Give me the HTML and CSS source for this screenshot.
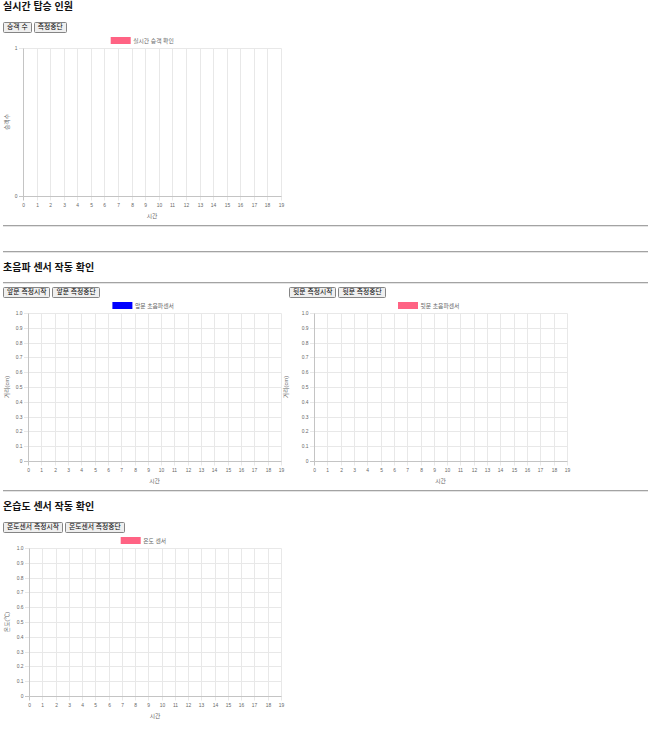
FILE: index.html
```html
<!DOCTYPE html>
<html lang="ko">
<head>
<meta charset="utf-8">
<title>센서 모니터링</title>
<link rel="stylesheet" href="styles.css">
</head>
<body>
<div class="page">
  <h2 class="title">실시간 탑승 인원</h2>
  <div class="btns btns-top"><button class="btn">승객 수</button><button class="btn">측정중단</button></div>
  <svg class="chart" width="283" height="190" data-left="20" data-legend="실시간 승객 확인" data-color="#ff6384" data-lx="107.7" data-ytitle="승객수" data-ytx="5.6" data-ticks="int"></svg>
  <hr class="rule rule-after-chart">
  <hr class="rule rule-gap">
  <h2 class="title title-mid">초음파 센서 작동 확인</h2>
  <hr class="rule rule-under-title">
  <div class="row">
    <div class="col">
      <div class="btns"><button class="btn">앞문 측정시작</button><button class="btn">앞문 측정중단</button></div>
      <svg class="chart" width="283" height="190" data-left="25" data-legend="앞문 초음파센서" data-color="#0000ff" data-lx="109.4" data-ytitle="거리(cm)" data-ytx="5.6" data-ticks="dec"></svg>
    </div>
    <div class="col">
      <div class="btns"><button class="btn">뒷문 측정시작</button><button class="btn">뒷문 측정중단</button></div>
      <svg class="chart" width="283" height="190" data-left="25" data-legend="뒷문 초음파센서" data-color="#ff6384" data-lx="109" data-ytitle="거리(cm)" data-ytx="-1.2" data-ticks="dec"></svg>
    </div>
  </div>
  <hr class="rule rule-after-chart">
  <h2 class="title title-mid">온습도 센서 작동 확인</h2>
  <div class="btns btns-top"><button class="btn">온도센서 측정시작</button><button class="btn">온도센서 측정중단</button></div>
  <svg class="chart" width="283" height="190" data-left="26" data-legend="온도 센서" data-color="#ff6384" data-lx="117.7" data-ytitle="온도(℃)" data-ytx="5.6" data-ticks="dec"></svg>
</div>
<script src="chart.js"></script>
</body>
</html>
```

FILE: styles.css
```css
* { box-sizing: border-box; }
body {
  margin: 0;
  background: #fff;
  color: #000;
  font-family: "Liberation Sans", "Noto Sans CJK KR", sans-serif;
}
.page { padding: 0 3px; }
.title {
  margin: 0;
  font-size: 10px;
  line-height: 13px;
  font-weight: bold;
  color: #111;
}
.title-mid { margin-top: 8px; }
.btns { display: flex; gap: 2px; margin: 0; }
.btns-top { margin-top: 9px; }
.btn {
  height: 10.5px;
  margin: 0;
  padding: 0 3px;
  font-family: "Liberation Sans", "Noto Sans CJK KR", sans-serif;
  font-size: 6.8px;
  line-height: 8px;
  color: #000;
  background: #efefef;
  border: 1px solid #858585;
  border-radius: 1.5px;
}
.row { display: flex; margin-top: 3px; }
.col { width: 286px; }
.chart { display: block; overflow: visible; }
.chart text {
  font-family: "Liberation Sans", "Noto Sans CJK KR", sans-serif;
  fill: #666;
}
.chart .tick { font-size: 4.9px; }
.chart .lbl { font-size: 5.8px; }
.chart .grid { stroke: #e8e8e8; stroke-width: 1; }
.chart .zero { stroke: #c4c4c4; stroke-width: 1; }
.rule {
  height: 0;
  margin: 0;
  border: 0;
  border-top: 1px solid #a3a3a3;
  border-bottom: 1px solid #e4e4e4;
}
.rule-after-chart { margin-top: 2.5px; }
.rule-gap { margin-top: 24px; }
.rule-under-title { margin-top: 8px; }
```

FILE: chart.js
```js
(function () {
  var NS = 'http://www.w3.org/2000/svg';
  function el(parent, tag, attrs, text) {
    var e = document.createElementNS(NS, tag);
    for (var k in attrs) e.setAttribute(k, attrs[k]);
    if (text != null) e.textContent = text;
    parent.appendChild(e);
    return e;
  }
  var T = 15, B = 163, R = 278;
  var charts = document.querySelectorAll('svg.chart');
  Array.prototype.forEach.call(charts, function (svg) {
    var d = svg.dataset;
    var L = +d.left;
    var n = d.ticks === 'int' ? 1 : 10;
    var gGrid = el(svg, 'g', {});
    var gZero = el(svg, 'g', {});
    var gText = el(svg, 'g', {});
    var i, x, y;
    for (i = 0; i < 20; i++) {
      x = Math.round(L + i * (R - L) / 19) + 0.5;
      el(i === 0 ? gZero : gGrid, 'line', { x1: x, x2: x, y1: T + 0.5, y2: B + 4.5, 'class': i === 0 ? 'zero' : 'grid' });
      el(gText, 'text', { x: x, y: 173.7, 'class': 'tick', 'text-anchor': 'middle' }, String(i));
    }
    for (i = 0; i <= n; i++) {
      y = Math.round(B - (B - T) * i / n) + 0.5;
      el(i === 0 ? gZero : gGrid, 'line', { x1: L - 4, x2: R + 0.5, y1: y, y2: y, 'class': i === 0 ? 'zero' : 'grid' });
      var label = i === 0 ? '0' : (n === 1 ? String(i) : (i / 10).toFixed(1));
      el(gText, 'text', { x: L - 5.5, y: y + 1.7, 'class': 'tick', 'text-anchor': 'end' }, label);
    }
    var lx = +d.lx;
    el(svg, 'rect', { x: lx, y: 4, width: 20, height: 7, fill: d.color });
    el(svg, 'text', { x: lx + 22.5, y: 9.8, 'class': 'lbl' }, d.legend);
    var midX = (L + R) / 2;
    el(svg, 'text', { x: midX, y: 185.3, 'class': 'lbl', 'text-anchor': 'middle' }, '시간');
    var midY = (T + B) / 2;
    var tx = +d.ytx;
    el(svg, 'text', { x: tx, y: midY, 'class': 'lbl', 'text-anchor': 'middle', transform: 'rotate(-90 ' + tx + ' ' + midY + ')' }, d.ytitle);
  });
})();
```
